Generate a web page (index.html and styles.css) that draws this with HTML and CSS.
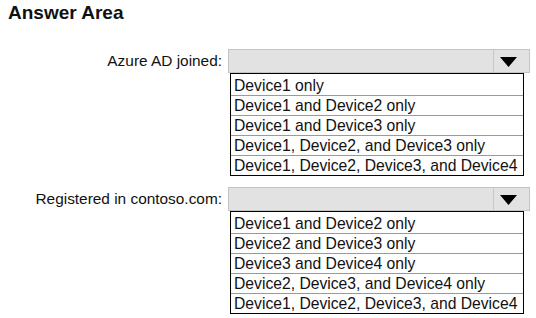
FILE: index.html
```html
<!DOCTYPE html>
<html>
<head>
<meta charset="utf-8">
<link rel="stylesheet" href="styles.css">
</head>
<body>
<h1 class="title">Answer Area</h1>
<div class="area">
  <div class="label">Azure AD joined:</div>
  <div class="control">
    <div class="dropdown">
      <div class="field"></div>
      <div class="btn"><svg width="17" height="10" viewBox="0 0 17 10"><polygon points="0,0 17,0 8.5,10" fill="#000"/></svg></div>
    </div>
    <ul class="options">
      <li>Device1 only</li>
      <li>Device1 and Device2 only</li>
      <li>Device1 and Device3 only</li>
      <li>Device1, Device2, and Device3 only</li>
      <li>Device1, Device2, Device3, and Device4</li>
    </ul>
  </div>

  <div class="label">Registered in contoso.com:</div>
  <div class="control">
    <div class="dropdown">
      <div class="field"></div>
      <div class="btn"><svg width="17" height="10" viewBox="0 0 17 10"><polygon points="0,0 17,0 8.5,10" fill="#000"/></svg></div>
    </div>
    <ul class="options">
      <li>Device1 and Device2 only</li>
      <li>Device2 and Device3 only</li>
      <li>Device3 and Device4 only</li>
      <li>Device2, Device3, and Device4 only</li>
      <li>Device1, Device2, Device3, and Device4</li>
    </ul>
  </div>
</div>
</body>
</html>
```
FILE: styles.css
```css
html, body {
  margin: 0;
  padding: 0;
  background: #fff;
}
body {
  font-family: "Liberation Sans", Arial, sans-serif;
  color: #111;
  width: 536px;
  height: 318px;
  overflow: hidden;
}
.title {
  margin: 0;
  padding: 2px 0 0 8px;
  font-size: 19px;
  line-height: 22px;
  font-weight: bold;
  height: 25px;
}
.area {
  display: grid;
  grid-template-columns: 228px 302px;
  row-gap: 11px;
  margin-top: 22px;
}
.label {
  text-align: right;
  padding-right: 6px;
  font-size: 15.4px;
  line-height: 24px;
  height: 24px;
}
.dropdown {
  display: flex;
  height: 24px;
  box-sizing: border-box;
  border: 1px solid #c4c4c4;
  background: #e2e2e2;
}
.field {
  flex: 1;
}
.btn {
  width: 36px;
  border-left: 1px solid #c8c8c8;
  display: flex;
  align-items: center;
  padding-left: 6px;
  box-sizing: border-box;
}
.btn svg {
  display: block;
  margin-top: 2px;
}
.options {
  list-style: none;
  margin: 0 0 0 2px;
  padding: 0;
  width: 294px;
  box-sizing: border-box;
  border: 1px solid #000;
}
.options li {
  height: 19px;
  line-height: 19px;
  font-size: 15.7px;
  padding-left: 3px;
  border-top: 1px solid #9a9a9a;
  white-space: nowrap;
}
.options li:first-child {
  border-top: none;
  height: 21px;
  line-height: 23px;
}
```
